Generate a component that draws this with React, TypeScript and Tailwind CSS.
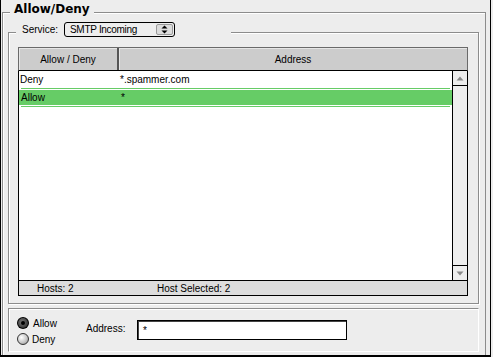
import React from "react";

const etched = "border border-[#8c8c8c] shadow-[inset_1px_1px_0_#ffffff,1px_1px_0_#ffffff]";

function Radio({ checked }: { checked: boolean }) {
  if (checked) {
    return (
      <div className="w-[12px] h-[12px] rounded-full bg-black flex items-center justify-center">
        <div className="w-[10px] h-[10px] rounded-full bg-[radial-gradient(circle_at_40%_40%,#777777,#3a3a3a_70%)] flex items-center justify-center">
          <div className="w-[4px] h-[4px] rounded-full bg-black" />
        </div>
      </div>
    );
  }
  return (
    <div className="w-[12px] h-[12px] rounded-full border border-[#333333] bg-[radial-gradient(circle_at_35%_35%,#ffffff,#c8c8c8_55%,#888888)]" />
  );
}

export default function App() {
  return (
    <div
      className="w-[493px] h-[357px] bg-[#ededed] overflow-hidden text-black"
      style={{ fontFamily: '"Liberation Sans", Arial, sans-serif' }}
    >
      <div className="w-[491px] h-[357px] border-l border-r border-b-2 border-black flex flex-col">
        {/* Outer group box */}
        <div className="relative mt-[12px] ml-[1px] w-[484px] flex-1 border-t border-l border-r border-[#8c8c8c] shadow-[inset_1px_1px_0_#ffffff]">
          <div
            className="absolute left-[7px] top-[-11px] px-[4px] bg-[#ededed] text-[12px] leading-[14px] font-bold"
            style={{ fontFamily: '"DejaVu Sans", sans-serif' }}
          >
            Allow/Deny
          </div>

          {/* Inner group box */}
          <div className={`relative ml-[5px] mt-[19px] w-[471px] h-[272px] ${etched}`}>
            <div className="absolute left-[7px] top-[-11px] h-[15px] w-[215px] bg-[#ededed] flex items-center pl-[6px] text-[10px]">
              <span className="w-[42px]">Service:</span>
              <div className="w-[111px] h-[15px] border border-black rounded-[3px] bg-[#eeeeee] flex items-center">
                <span className="flex-1 pl-[5px] text-[10px] leading-[13px] tracking-[-0.3px]">SMTP Incoming</span>
                <div className="w-[17px] h-[11px] mr-[1px] border border-[#9a9a9a] rounded-[2px] bg-[#dcdcdc] flex items-center justify-center">
                  <svg width="7" height="9" viewBox="0 0 7 9">
                    <path d="M3.5 0.5 L6.5 3.5 L0.5 3.5 Z" fill="#000" />
                    <path d="M0.5 5.5 L6.5 5.5 L3.5 8.5 Z" fill="#000" />
                  </svg>
                </div>
              </div>
            </div>

            {/* Table */}
            <div className="ml-[9px] mt-[14px] w-[450px] text-[10px]">
              {/* Header */}
              <div className="flex h-[24px] border-t border-l border-r border-[#6a6a6a] border-b border-b-black bg-[#cccccc]">
                <div className="w-[100px] border-r-2 border-[#555555] flex items-center justify-center shadow-[inset_1px_1px_0_#e6e6e6]">
                  Allow / Deny
                </div>
                <div className="flex-1 flex items-center justify-center shadow-[inset_1px_1px_0_#e6e6e6]">
                  Address
                </div>
              </div>

              {/* Body */}
              <div className="flex h-[209px] border-l border-black">
                <div className="flex-1 bg-white flex flex-col">
                  <div className="h-[17px] flex items-center">
                    <span className="w-[101px] pl-[1px]">Deny</span>
                    <span>*.spammer.com</span>
                  </div>
                  <div className="h-[19px] flex flex-col">
                    <div className="h-px mx-[2px] bg-[#66cc66]" />
                    <div className="h-px" />
                    <div className="h-[15px] bg-[#66cc66] flex items-center">
                      <span className="w-[102px] pl-[2px]">Allow</span>
                      <span>*</span>
                    </div>
                    <div className="h-px" />
                    <div className="h-px mx-[2px] bg-[#66cc66]" />
                  </div>
                </div>
                {/* Scrollbar */}
                <div className="w-[16px] border-l border-r border-black bg-[#eeeeee] flex flex-col">
                  <div className="h-[15px] border-b border-black flex items-center justify-center">
                    <svg width="8" height="5" viewBox="0 0 8 5">
                      <path d="M4 0.5 L7.5 4.5 L0.5 4.5 Z" fill="#8a8a8a" />
                    </svg>
                  </div>
                  <div className="flex-1" />
                  <div className="h-[15px] border-t border-black flex items-center justify-center">
                    <svg width="8" height="5" viewBox="0 0 8 5">
                      <path d="M0.5 0.5 L7.5 0.5 L4 4.5 Z" fill="#8a8a8a" />
                    </svg>
                  </div>
                </div>
              </div>

              {/* Footer */}
              <div className="h-[16px] border border-black bg-[#dddddd] flex items-center">
                <span className="pl-[18px] w-[138px]">Hosts: 2</span>
                <span>Host Selected: 2</span>
              </div>
            </div>
          </div>

          {/* Bottom panel */}
          <div className="ml-[5px] mt-[4px] w-[471px] h-[44px] border-t border-l border-[#8c8c8c] border-b border-r border-b-white border-r-white shadow-[inset_1px_1px_0_#ffffff] flex text-[10px]">
            <div className="ml-[8px] mt-[8px] w-[69px] flex flex-col gap-[4px]">
              <div className="flex items-center h-[12px] gap-[4px]">
                <Radio checked />
                <span>Allow</span>
              </div>
              <div className="flex items-center h-[12px] gap-[3px]">
                <Radio checked={false} />
                <span>Deny</span>
              </div>
            </div>
            <div className="mt-[11px] flex items-center h-[20px] self-start">
              <span className="w-[51px] pb-[4px]">Address:</span>
              <div className="w-[210px] h-[20px] border border-black bg-white shadow-[inset_1px_1px_0_#444444] flex items-center pl-[5px]">
                *
              </div>
            </div>
          </div>
        </div>
      </div>
    </div>
  );
}
